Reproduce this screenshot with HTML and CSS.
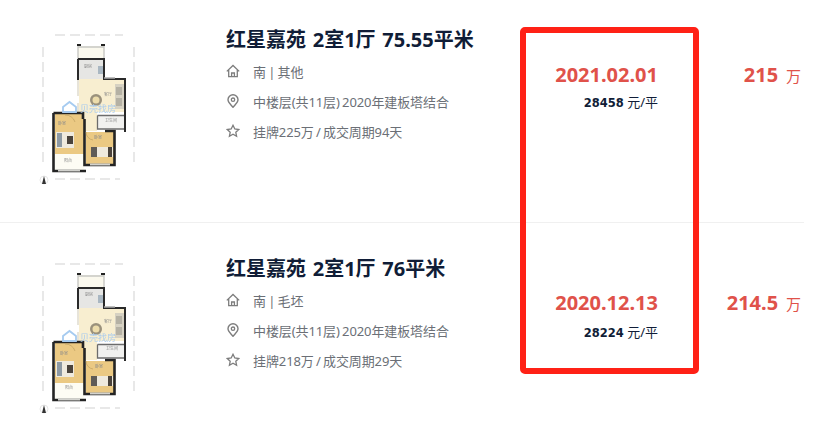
FILE: index.html
```html
<!DOCTYPE html>
<html lang="zh-CN">

<head>
    <meta charset="UTF-8">
    <meta name="viewport" content="width=device-width, initial-scale=1.0">
    <link rel="stylesheet" href="styles.css">
    <title>成交记录</title>
</head>

<body>
    <svg class="defs" width="0" height="0">
        <defs>
            <symbol id="icoHome" viewBox="0 0 14 14">
                <path d="M.8 7.400 7 1.500l6.200 5.900M2.700 6v6.600h8.600V6M5.600 12.600V9h2.800v3.600" fill="none" stroke="#7d7d7d" stroke-width="1.300" />
            </symbol>
            <symbol id="icoPin" viewBox="0 0 14 14">
                <path d="M7 13.300C4.500 10.300 2 8.200 2 5.700a5 5 0 0 1 10 0c0 2.500-2.500 4.600-5 7.600Z" fill="none" stroke="#7d7d7d" stroke-width="1.400" />
                <circle cx="7" cy="5.700" r="1.700" fill="none" stroke="#7d7d7d" stroke-width="1.300" />
            </symbol>
            <symbol id="icoStar" viewBox="0 0 14 14">
                <path d="M7 1.300 8.800 5l4 .5-3 2.800.8 4L7 10.300l-3.600 2 .8-4-3-2.800 4-.5Z" fill="none" stroke="#7d7d7d" stroke-width="1.300" />
            </symbol>
            <!-- Plano: base comun de las dos viviendas -->
            <symbol id="plano" viewBox="0 0 130 180">
                <rect x="58" y="26" width="26" height="14" fill="#fbf9ee" />
                <rect x="59" y="40" width="24" height="19" fill="#e6e6e4" />
                <rect x="78" y="46" width="5" height="8" fill="#a9b7c2" />
                <rect x="59" y="59" width="46" height="33" fill="#f8eed0" />
                <rect x="64" y="92" width="13" height="19" fill="#f8eed0" />
                <rect x="77" y="95" width="28" height="14" fill="#f1f1ef" />
                <rect x="35" y="94" width="29" height="40" fill="#ebc983" />
                <rect x="66" y="112" width="28" height="32" fill="#ebc983" />
                <rect x="35" y="134" width="29" height="16" fill="#fdfcf4" />
                <!-- muebles -->
                <rect x="36" y="112" width="18" height="16" fill="#efeade" />
                <rect x="37" y="113" width="5" height="14" fill="#8d99a3" />
                <rect x="47" y="116" width="6" height="8" fill="#4a433c" />
                <rect x="71" y="127" width="22" height="10" fill="#efeade" />
                <rect x="71" y="127" width="6" height="10" fill="#5f5b56" />
                <rect x="88" y="127" width="4" height="10" fill="#4a433c" />
                <rect x="95" y="64" width="9" height="25" fill="#d6d1c2" />
                <rect x="96" y="67" width="6" height="8" fill="#b5b1a4" />
                <rect x="96" y="78" width="6" height="8" fill="#b5b1a4" />
                <circle cx="76" cy="80" r="6" fill="#9a917c" />
                <circle cx="76" cy="80" r="3.500" fill="#ecdcab" />
                <!-- muros -->
                <path d="M58 26V40M84 26V40M58 27H84" fill="none" stroke="#c8c8c4" stroke-width="1.400" />
                <path d="M57 25h4M81 25h4" fill="none" stroke="#222" stroke-width="2.200" />
                <path d="M58 39H84V59H105V92M58 39V60" fill="none" stroke="#2a2a2a" stroke-width="2" />
                <path d="M84 58H95" fill="none" stroke="#aaa" stroke-width="1.500" />
                <path d="M58 60V76M58 83V92" fill="none" stroke="#d8d3c2" stroke-width="1.200" />
                <path d="M33.500 93V151H66M33.500 93H63V99M64.500 99V145H94.500V111H85" fill="none" stroke="#242424" stroke-width="2.600" />
                <path d="M38 150.500H60M70 144.500H90" fill="none" stroke="#d2d2ce" stroke-width="1.800" />
                <path d="M77.500 95.500H105V109M77.500 95.500V109H105" fill="none" stroke="#6c6c6c" stroke-width="1.300" />
                <path d="M105 92V112" fill="none" stroke="#2a2a2a" stroke-width="2" />
                <path d="M45 95a10 10 0 0 1 10 7M66 112a8 8 0 0 0 7 8" fill="none" stroke="#b89a5c" stroke-width=".6" />
                <!-- cotas -->
                <path d="M35 15H103M35 159H100M23 27V146M114 27V146" fill="none" stroke="#bdbdbd" stroke-width=".7" stroke-dasharray="10 5" />
                <!-- marca de agua -->
                <path d="M43 87 49.500 82 56 87V92H43Z" fill="none" stroke="#a6cbf0" stroke-width="1.800" />
                <text class="marca" x="60" y="91.500">贝壳找房</text>
                <circle cx="24" cy="160" r="4" fill="none" stroke="#ccc" stroke-width=".5" />
                <path d="M24 156 26 164H22Z" fill="#333" />
            </symbol>
        </defs>
    </svg>

    <div class="lista">
        <div class="fila filaPrimera">
            <svg class="plano" viewBox="0 0 130 180">
                <use href="#plano" width="130" height="180" />
                <text class="cuarto" x="64" y="48">厨房</text>
                <text class="cuarto" x="84" y="76">客厅</text>
                <text class="cuarto" x="38" y="105">卧室</text>
                <text class="cuarto" x="44" y="142">阳台</text>
                <text class="cuarto" x="74" y="119">卧室</text>
                <text class="cuarto" x="85" y="102">卫生间</text>
            </svg>
            <div class="info">
                <h2 class="titulo">红星嘉苑 2室1厅 75.55平米</h2>
                <p class="dato"><svg class="ico"><use href="#icoHome" /></svg>南 | 其他</p>
                <p class="dato"><svg class="ico"><use href="#icoPin" /></svg>中楼层(共11层) 2020年建板塔结合</p>
                <p class="dato"><svg class="ico"><use href="#icoStar" /></svg>挂牌225万 / 成交周期94天</p>
            </div>
            <div class="fecha">
                <div class="dia">2021.02.01</div>
                <div class="unitario"><b>28458</b> 元/平</div>
            </div>
            <div class="precio"><b>215</b> 万</div>
        </div>
        <div class="fila filaSegunda">
            <svg class="plano" viewBox="0 0 130 180">
                <use href="#plano" width="130" height="180" />
                <text class="cuarto" x="65" y="47">厨房</text>
                <text class="cuarto" x="84" y="74">客厅</text>
                <text class="cuarto" x="40" y="106">卧室</text>
                <text class="cuarto" x="45" y="140">阳台</text>
                <text class="cuarto" x="75" y="119">卧室</text>
                <text class="cuarto" x="86" y="101">卫生间</text>
            </svg>
            <div class="info">
                <h2 class="titulo">红星嘉苑 2室1厅 76平米</h2>
                <p class="dato"><svg class="ico"><use href="#icoHome" /></svg>南 | 毛坯</p>
                <p class="dato"><svg class="ico"><use href="#icoPin" /></svg>中楼层(共11层) 2020年建板塔结合</p>
                <p class="dato"><svg class="ico"><use href="#icoStar" /></svg>挂牌218万 / 成交周期29天</p>
            </div>
            <div class="fecha">
                <div class="dia">2020.12.13</div>
                <div class="unitario"><b>28224</b> 元/平</div>
            </div>
            <div class="precio"><b>214.5</b> 万</div>
        </div>
        <!-- Marco rojo puesto encima de la columna de fechas -->
        <div class="marco"></div>
    </div>
</body>

</html>
```

FILE: styles.css
```css
* {
    box-sizing: border-box;
}

body {
    margin: 0;
    background-color: #fff;
    font-family: "Noto Sans", "Noto Sans CJK SC", sans-serif;
    overflow: hidden;
}

.defs {
    display: block;
}

.lista {
    position: relative;
    width: 826px;
    height: 437px;
}

.fila {
    display: flex;
    align-items: flex-start;
    width: 804px;
    padding-left: 20px;
}

.filaPrimera {
    height: 223px;
    padding-top: 20px;
    border-bottom: 1px solid #f0f0f0;
}

.filaSegunda {
    height: 214px;
    padding-top: 26px;
}

.plano {
    width: 130px;
    height: 180px;
    flex: none;
    filter: blur(0.4px);
}

.info {
    width: 294px;
    margin-left: 76px;
    padding-top: 6px;
}

.titulo {
    margin: 0 0 8px 0;
    font-size: 20px;
    line-height: 28px;
    font-weight: 700;
    color: #101d37;
    white-space: nowrap;
    word-spacing: 1.500px;
}

.dato {
    display: flex;
    align-items: center;
    margin: 0 0 12px 0;
    height: 18px;
    font-size: 13px;
    color: #6b6f76;
    white-space: nowrap;
    letter-spacing: -0.100px;
    word-spacing: -1px;
}

.ico {
    width: 14px;
    height: 14px;
    margin-right: 13px;
    flex: none;
}

.fecha {
    width: 138px;
    text-align: right;
    padding-top: 43px;
}

.filaSegunda .fecha,
.filaSegunda .precio {
    padding-top: 42px;
}

.dia {
    font-size: 20px;
    line-height: 24px;
    font-weight: 700;
    color: #e0524a;
}

.unitario {
    margin-top: 6px;
    font-size: 13px;
    line-height: 18px;
    color: #101d37;
}

.filaSegunda .unitario {
    margin-top: 8px;
}

.unitario b {
    font-family: "DejaVu Sans", sans-serif;
    font-size: 11.500px;
}

.precio {
    width: 143px;
    padding-top: 43px;
    text-align: right;
    font-size: 15px;
    line-height: 24px;
    color: #e0524a;
}

.precio b {
    font-size: 20px;
    margin-right: 4px;
}

.marca {
    font-size: 9px;
    fill: #a9cbee;
}

.cuarto {
    font-size: 4px;
    fill: #8a8a8a;
}

.marco {
    position: absolute;
    left: 520px;
    top: 27px;
    width: 179px;
    height: 347px;
    border: 6px solid #ff2116;
    border-radius: 5px;
}
```
